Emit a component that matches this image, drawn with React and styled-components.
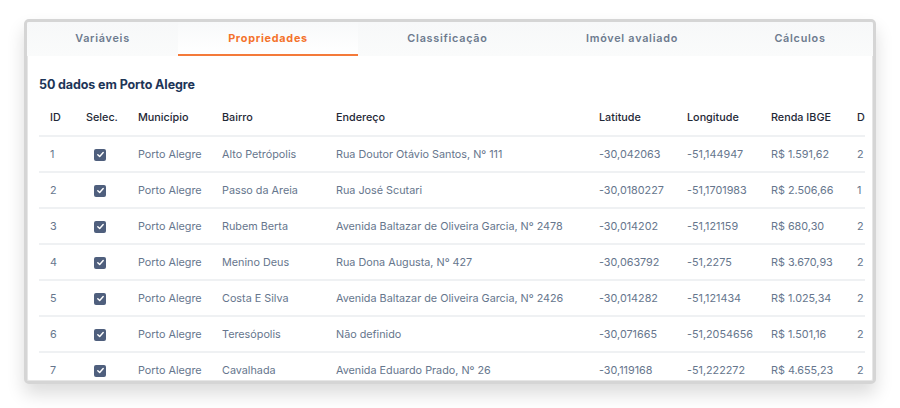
import React from "react";
import styled, { createGlobalStyle } from "styled-components";

const Global = createGlobalStyle`
  html, body { margin: 0; padding: 0; background: #ffffff; }
  body { font-family: Inter, "Open Sans", sans-serif; -webkit-font-smoothing: antialiased; }
`;

const Page = styled.div`
  width: 900px;
  height: 408px;
  box-sizing: border-box;
  padding: 19px 24px 0 24px;
  background: #ffffff;
`;

const Frame = styled.div`
  width: 852px;
  height: 365px;
  box-sizing: border-box;
  border: 3px solid #d5d5d5;
  border-radius: 5px;
  background: #ffffff;
  box-shadow: 0 10px 18px rgba(0, 0, 0, 0.14), inset 0 0 0 1px #e6e6e6;
  overflow: hidden;
  display: flex;
  flex-direction: column;
`;

const TabBar = styled.div`
  display: flex;
  height: 34px;
  flex-shrink: 0;
  background: linear-gradient(#f7f8f9, #fafbfb);
`;

const Tab = styled.div`
  width: ${(p) => p.$w}px;
  flex-shrink: 0;
  box-sizing: border-box;
  display: flex;
  align-items: center;
  justify-content: center;
  font-size: 10.8px;
  letter-spacing: 0.75px;
  font-weight: ${(p) => (p.$active ? 700 : 600)};
  color: ${(p) => (p.$active ? "#f4722b" : "#6d7a8e")};
  border-bottom: 2px solid ${(p) => (p.$active ? "#f47a3a" : "transparent")};
  background: ${(p) => (p.$active ? "linear-gradient(#f8f9fa, #ffffff)" : "transparent")};
  padding-top: 1px;
`;

const Body = styled.div`
  flex: 1;
  min-height: 0;
  padding: 0 8px 0 12px;
  display: flex;
  flex-direction: column;
`;

const Title = styled.h2`
  margin: 0;
  padding: 21px 0 0 0;
  height: 43px;
  flex-shrink: 0;
  box-sizing: border-box;
  font-size: 12.5px;
  font-weight: 700;
  color: #1d3557;
  letter-spacing: -0.1px;
`;

const TableClip = styled.div`
  flex: 1;
  min-height: 0;
  overflow: hidden;
`;

const Table = styled.table`
  border-collapse: collapse;
  table-layout: fixed;
  width: 900px;
`;

const Th = styled.th`
  text-align: left;
  font-size: 10.8px;
  font-weight: 500;
  color: #1f2937;
  height: 36px;
  padding: 0 0 0 11px;
  border-bottom: 2px solid #eff1f3;
  white-space: nowrap;
  vertical-align: middle;
`;

const Row = styled.tr`
  height: 36px;
  border-bottom: 2px solid #eff1f3;
`;

const Td = styled.td`
  font-size: 10.8px;
  color: #66768d;
  padding: 0 0 0 11px;
  white-space: nowrap;
  overflow: hidden;
  vertical-align: middle;
`;

const Check = styled.span`
  display: inline-flex;
  width: 12px;
  height: 12px;
  margin-left: 8px;
  border-radius: 2px;
  background: #4f5f7d;
  align-items: center;
  justify-content: center;
  vertical-align: middle;
`;

const cols = [36, 52, 84, 114, 263, 88, 84, 86, 120];

const rows = [
  ["1", "Alto Petrópolis", "Rua Doutor Otávio Santos, Nº 111", "-30,042063", "-51,144947", "R$ 1.591,62", "2"],
  ["2", "Passo da Areia", "Rua José Scutari", "-30,0180227", "-51,1701983", "R$ 2.506,66", "1"],
  ["3", "Rubem Berta", "Avenida Baltazar de Oliveira Garcia, Nº 2478", "-30,014202", "-51,121159", "R$ 680,30", "2"],
  ["4", "Menino Deus", "Rua Dona Augusta, Nº 427", "-30,063792", "-51,2275", "R$ 3.670,93", "2"],
  ["5", "Costa E Silva", "Avenida Baltazar de Oliveira Garcia, Nº 2426", "-30,014282", "-51,121434", "R$ 1.025,34", "2"],
  ["6", "Teresópolis", "Não definido", "-30,071665", "-51,2054656", "R$ 1.501,16", "2"],
  ["7", "Cavalhada", "Avenida Eduardo Prado, Nº 26", "-30,119168", "-51,222272", "R$ 4.655,23", "2"],
];

const tabs = [
  ["Variáveis", 151],
  ["Propriedades", 180, true],
  ["Classificação", 179],
  ["Imóvel avaliado", 190],
  ["Cálculos", 146],
];

export default function App() {
  return (
    <Page>
      <Global />
      <Frame>
        <TabBar>
          {tabs.map(([t, w, a]) => (
            <Tab key={t} $w={w} $active={a}>
              {t}
            </Tab>
          ))}
        </TabBar>
        <Body>
          <Title>50 dados em Porto Alegre</Title>
          <TableClip>
            <Table>
              <colgroup>
                {cols.map((w, i) => (
                  <col key={i} style={{ width: w }} />
                ))}
              </colgroup>
              <thead>
                <tr>
                  <Th>ID</Th>
                  <Th>Selec.</Th>
                  <Th>Município</Th>
                  <Th>Bairro</Th>
                  <Th>Endereço</Th>
                  <Th>Latitude</Th>
                  <Th>Longitude</Th>
                  <Th>Renda IBGE</Th>
                  <Th>Data</Th>
                </tr>
              </thead>
              <tbody>
                {rows.map((r) => (
                  <Row key={r[0]}>
                    <Td>{r[0]}</Td>
                    <Td>
                      <Check>
                        <svg width="9" height="9" viewBox="0 0 10 10">
                          <path d="M2 5.2 L4.1 7.2 L8 2.8" fill="none" stroke="#fff" strokeWidth="1.6" strokeLinecap="round" strokeLinejoin="round" />
                        </svg>
                      </Check>
                    </Td>
                    <Td>Porto Alegre</Td>
                    <Td>{r[1]}</Td>
                    <Td>{r[2]}</Td>
                    <Td>{r[3]}</Td>
                    <Td>{r[4]}</Td>
                    <Td>{r[5]}</Td>
                    <Td>{r[6]}</Td>
                  </Row>
                ))}
              </tbody>
            </Table>
          </TableClip>
        </Body>
      </Frame>
    </Page>
  );
}
